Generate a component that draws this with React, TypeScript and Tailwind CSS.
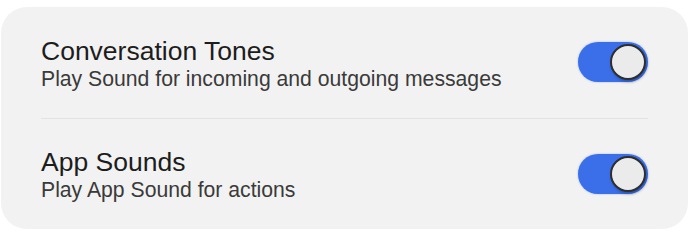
import { useState } from "react";

type Setting = {
  id: string;
  title: string;
  subtitle: string;
};

const settings: Setting[] = [
  {
    id: "tones",
    title: "Conversation Tones",
    subtitle: "Play Sound for incoming and outgoing messages",
  },
  {
    id: "sounds",
    title: "App Sounds",
    subtitle: "Play App Sound for actions",
  },
];

function Toggle({ on, onChange }: { on: boolean; onChange: () => void }) {
  return (
    <button
      onClick={onChange}
      className={`flex h-[40px] w-[70px] shrink-0 items-center rounded-full px-[2px] shadow-[0_0_2px_rgba(59,111,240,0.5)] ${
        on ? "justify-end bg-[#3b6fea]" : "justify-start bg-[#d4d4d4]"
      }`}
    >
      <span className="block h-[36px] w-[36px] rounded-full border-2 border-[#2e2e2e] bg-[#ebebeb] shadow-[1px_2px_3px_rgba(0,0,0,0.25)]" />
    </button>
  );
}

export default function App() {
  const [enabled, setEnabled] = useState<Record<string, boolean>>({
    tones: true,
    sounds: true,
  });

  return (
    <div className="h-[231px] w-[690px] bg-white pt-[7px] pl-[1px] font-['Liberation_Sans',Arial,sans-serif]">
      <div className="h-[222px] w-[687px] rounded-[26px] bg-[#f2f2f2] px-[40px]">
        {settings.map((s, i) => (
          <div key={s.id}>
            {i > 0 && <div className="h-px bg-[#e3e3e3]" />}
            <div className={`flex items-center justify-between ${i === 0 ? "h-[111px] pt-[3px]" : "h-[110px] pt-[2px]"}`}>
              <div>
                <div className="text-[26.5px] leading-[30px] text-[#1d1d1d]">{s.title}</div>
                <div className="text-[21.2px] leading-[26px] text-[#3a3a3a]">{s.subtitle}</div>
              </div>
              <div className={i === 0 ? "-mt-[5px]" : "-mt-[3px]"}>
                <Toggle
                  on={enabled[s.id]}
                  onChange={() => setEnabled({ ...enabled, [s.id]: !enabled[s.id] })}
                />
              </div>
            </div>
          </div>
        ))}
      </div>
    </div>
  );
}
